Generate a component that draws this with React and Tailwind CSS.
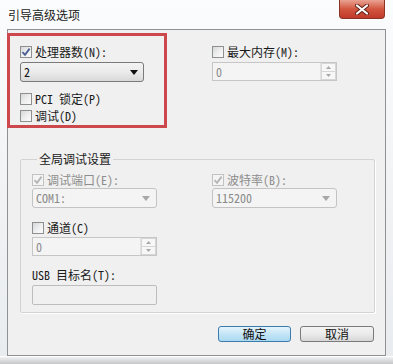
import React from "react";

const FONT = '"Noto Sans Mono CJK SC", "Noto Sans CJK SC", "DejaVu Sans", sans-serif';

function Check({ checked, disabled }) {
  return (
    <span
      className={
        disabled
          ? "w-[12px] h-[12px] shrink-0 border border-[#c2c2c2] bg-[#f4f4f4] flex items-center justify-center"
          : "w-[12px] h-[12px] shrink-0 border border-[#8e8f8f] bg-gradient-to-br from-[#d4d6da] via-[#eeeeee] to-[#fcfcfc] flex items-center justify-center"
      }
    >
      {checked && (
        <svg width="10" height="10" viewBox="0 0 10 10">
          <path
            d="M1.5 5.2 L4 7.8 L8.6 1.6"
            fill="none"
            stroke={disabled ? "#b4b4b4" : "#4a5f92"}
            strokeWidth="1.8"
          />
        </svg>
      )}
    </span>
  );
}

function CheckRow({ checked, disabled, children, dim }) {
  return (
    <div className="h-[12px] flex items-center gap-[3px]">
      <Check checked={checked} disabled={disabled} />
      <span
        className={
          dim
            ? "text-[12px] leading-[12px] text-[#8d8d8d] whitespace-nowrap"
            : "text-[12px] leading-[12px] text-[#1a1a1a] whitespace-nowrap"
        }
      >
        {children}
      </span>
    </div>
  );
}

function Combo({ value }) {
  return (
    <div className="w-[124px] h-[20px] rounded-[3px] border border-[#7a7a7a] bg-gradient-to-b from-[#f3f3f3] via-[#ebebeb] to-[#d9d9d9] flex items-center pl-[3px] pr-[5px]">
      <span className="text-[12px] leading-[12px] text-[#111]">{value}</span>
      <svg className="ml-auto" width="8" height="5" viewBox="0 0 8 5">
        <path d="M0 0 H8 L4 5 Z" fill="#111" />
      </svg>
    </div>
  );
}

function ComboDisabled({ value }) {
  return (
    <div className="w-[125px] h-[20px] rounded-[3px] border border-[#c3c3c3] bg-[#f4f4f4] flex items-center pl-[3px] pr-[6px]">
      <span className="text-[12px] leading-[12px] text-[#8a8a8a]">{value}</span>
      <svg className="ml-auto" width="8" height="5" viewBox="0 0 8 5">
        <path d="M0 0 H8 L4 5 Z" fill="#a8a8a8" />
      </svg>
    </div>
  );
}

function Spin({ value }) {
  return (
    <div className="w-[125px] h-[19px] border border-[#c6c6c6] bg-[#f4f4f4] flex items-stretch">
      <span className="flex-1 pl-[3px] text-[12px] leading-[17px] text-[#8a8a8a]">{value}</span>
      <div className="w-[16px] flex flex-col border-l border-[#e2e2e2]">
        <div className="flex-1 flex items-center justify-center border border-[#d6d6d6] bg-[#f7f7f7]">
          <svg width="5" height="3" viewBox="0 0 5 3"><path d="M0 3 L2.5 0 L5 3 Z" fill="#a8a8a8" /></svg>
        </div>
        <div className="flex-1 flex items-center justify-center border border-t-0 border-[#d6d6d6] bg-[#f7f7f7]">
          <svg width="5" height="3" viewBox="0 0 5 3"><path d="M0 0 L5 0 L2.5 3 Z" fill="#a8a8a8" /></svg>
        </div>
      </div>
    </div>
  );
}

export default function App() {
  return (
    <div
      className="w-[393px] h-[364px] relative overflow-hidden flex flex-col bg-gradient-to-b from-[#fbfcfd] via-[#f1f3f5] to-[#e9ecef]"
      style={{ fontFamily: FONT }}
    >
      {/* title bar */}
      <div className="h-[29px] shrink-0 flex items-start">
        <div className="pl-[8px] pt-[9px] text-[12px] leading-[12px] text-[#1b1b1b]">引导高级选项</div>
        <div className="ml-auto mr-[8px] w-[46px] h-[19px] rounded-b-[4px] border border-t-0 border-[#8a3326] bg-gradient-to-b from-[#e8a292] via-[#d2553f] to-[#c0392a] flex items-center justify-center">
          <svg width="14" height="11" viewBox="0 0 14 11">
            <path d="M2 1.5 L12 9.5 M12 1.5 L2 9.5" stroke="#5a2018" strokeWidth="4" strokeLinecap="round" />
            <path d="M2 1.5 L12 9.5 M12 1.5 L2 9.5" stroke="#ffffff" strokeWidth="2.2" strokeLinecap="round" />
          </svg>
        </div>
      </div>

      {/* client area */}
      <div className="mx-[7px] h-[327px] shrink-0 border border-[#8f9193] bg-[#f0f0f0] relative flex flex-col">
        {/* top section */}
        <div className="pt-[16px] pl-[12px] flex gap-[68px]">
          <div className="w-[124px] flex flex-col">
            <CheckRow checked>处理器数(N):</CheckRow>
            <div className="mt-[4px]">
              <Combo value="2" />
            </div>
            <div className="mt-[11px]">
              <CheckRow>PCI 锁定(P)</CheckRow>
            </div>
            <div className="mt-[5px]">
              <CheckRow>调试(D)</CheckRow>
            </div>
          </div>
          <div className="flex flex-col">
            <CheckRow>最大内存(M):</CheckRow>
            <div className="mt-[4px]">
              <Spin value="0" />
            </div>
          </div>
        </div>

        {/* group box */}
        <fieldset className="ml-[12px] mt-[31px] w-[355px] border border-[#d3d3d3] rounded-[2px] pl-[11px] pb-[7px] pt-[9px] shadow-[1px_1px_0_#ffffff]">
          <legend className="ml-[5px] px-[2px] text-[12px] leading-[12px] text-[#1a1a1a]">全局调试设置</legend>
          <div className="flex gap-[55px]">
            <div className="w-[125px] flex flex-col">
              <CheckRow checked disabled dim>调试端口(E):</CheckRow>
              <div className="mt-[2px]">
                <ComboDisabled value="COM1:" />
              </div>
              <div className="mt-[14px]">
                <CheckRow>通道(C)</CheckRow>
              </div>
              <div className="mt-[3px]">
                <Spin value="0" />
              </div>
              <div className="mt-[13px] h-[12px] text-[12px] leading-[12px] text-[#1a1a1a] whitespace-nowrap">
                USB 目标名(T):
              </div>
              <div className="mt-[4px] w-[125px] h-[20px] rounded-[2px] border border-[#bdbdbd] bg-[#f0f0f0]" />
            </div>
            <div className="flex flex-col">
              <CheckRow checked disabled dim>波特率(B):</CheckRow>
              <div className="mt-[2px]">
                <ComboDisabled value="115200" />
              </div>
            </div>
          </div>
        </fieldset>

        {/* buttons */}
        <div className="mt-[13px] pr-[11px] flex justify-end gap-[9px]">
          <div className="w-[73px] h-[16px] rounded-[3px] border border-[#3d7bad] bg-gradient-to-b from-[#e5f4fc] via-[#c4e5f6] to-[#a9d9f2] flex items-center justify-center text-[12px] leading-[12px] text-[#111]">
            确定
          </div>
          <div className="w-[74px] h-[16px] rounded-[3px] border border-[#7a7a7a] bg-gradient-to-b from-[#f3f3f3] via-[#ebebeb] to-[#d6d6d6] flex items-center justify-center text-[12px] leading-[12px] text-[#111]">
            取消
          </div>
        </div>

        {/* red annotation box */}
        <div className="absolute left-[-1px] top-[3px] w-[160px] h-[95px] border-[3px] border-[#cc484d] pointer-events-none" />
      </div>

      <div className="flex-1 border-t border-[#ffffff] bg-gradient-to-b from-[#f0f2f4] to-[#c4c6c8]" />
    </div>
  );
}
